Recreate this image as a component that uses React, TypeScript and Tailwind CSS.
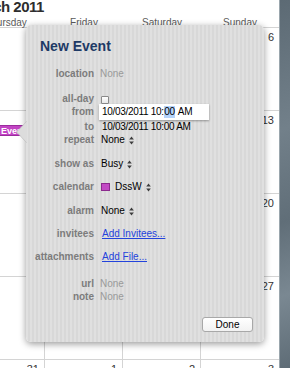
import type { ReactNode } from 'react';

const DAYS = ['Thursday', 'Friday', 'Saturday', 'Sunday'];
const WEEKS = [
  ['3', '4', '5', '6'],
  ['10', '11', '12', '13'],
  ['17', '18', '19', '20'],
  ['24', '25', '26', '27'],
  ['31', '1', '2', '3'],
];

function Stepper() {
  return (
    <svg width="5" height="9" viewBox="0 0 5 9" className="ml-[4px] shrink-0">
      <path d="M2.5 0.5 L4.8 3.6 H0.2 Z" fill="#3c3c3c" />
      <path d="M2.5 8.5 L4.8 5.4 H0.2 Z" fill="#3c3c3c" />
    </svg>
  );
}

interface RowProps {
  label: string;
  className: string;
  children?: ReactNode;
}

function Row({ label, className, children }: RowProps) {
  return (
    <div className={`flex items-center ${className}`}>
      <div className="w-[68px] shrink-0 text-right whitespace-nowrap font-bold text-[#7c7c7c]">{label}</div>
      <div className="ml-[6px] flex items-center">{children}</div>
    </div>
  );
}

function Popover() {
  return (
    <div className="absolute left-[26px] top-[25px] w-[238px] h-[317px] rounded-[5px] shadow-[0_2px_7px_rgba(0,0,0,0.4)] bg-[repeating-linear-gradient(90deg,#e0e0e0_0px,#e0e0e0_2px,#d8d8d8_2px,#d8d8d8_4px)] pt-[12px] text-[10px] leading-[12px]">
      {/* arrow towards the event */}
      <svg width="11" height="22" viewBox="0 0 11 22" className="absolute left-[-10px] top-[96px]">
        <path d="M11 0 L0.5 11 L11 22 Z" fill="#dcdcdc" stroke="#b8b8b8" strokeWidth="0.6" />
        <rect x="10" y="0.5" width="1.5" height="21" fill="#dcdcdc" />
      </svg>

      <div className="ml-[14px] h-[18px] leading-[18px] text-[14px] font-bold text-[#1e3a66]">New Event</div>

      <Row label="location" className="mt-[12px] h-[14px]">
        <span className="text-[#9a9a9a]">None</span>
      </Row>

      <Row label="all-day" className="mt-[12px] h-[11px]">
        <span className="block w-[8px] h-[8px] mt-[2px] ml-[1px] rounded-[1px] border border-[#8a8a8a] bg-[linear-gradient(#ffffff,#e8e8e8)]" />
      </Row>

      <Row label="from" className="h-[16px]">
        <div className="ml-[-1px] w-[110px] h-[16px] flex items-center pl-[3px] bg-white shadow-[0_1px_2px_rgba(0,0,0,0.35)] text-black tracking-[-0.3px]">
          10/03/2011 10:<span className="bg-[#b4d3fb] px-[0.5px]">00</span>&nbsp;AM
        </div>
      </Row>

      <Row label="to" className="h-[13px]">
        <span className="ml-[2px] text-black tracking-[-0.3px]">10/03/2011 10:00 AM</span>
      </Row>

      <Row label="repeat" className="h-[14px]">
        <span className="ml-[1px] text-black">None</span>
        <Stepper />
      </Row>

      <Row label="show as" className="mt-[10px] h-[14px]">
        <span className="ml-[1px] text-black">Busy</span>
        <Stepper />
      </Row>

      <Row label="calendar" className="mt-[9px] h-[14px]">
        <span className="block ml-[1px] w-[9px] h-[8px] bg-[#c24ac4] border border-[#8c2a8e]" />
        <span className="ml-[5px] text-black">DssW</span>
        <Stepper />
      </Row>

      <Row label="alarm" className="mt-[10px] h-[14px]">
        <span className="ml-[1px] text-black">None</span>
        <Stepper />
      </Row>

      <Row label="invitees" className="mt-[9px] h-[14px]">
        <span className="ml-[2px] text-[#2343dc] underline">Add Invitees...</span>
      </Row>

      <Row label="attachments" className="mt-[9px] h-[14px]">
        <span className="ml-[2px] text-[#2343dc] underline">Add File...</span>
      </Row>

      <Row label="url" className="mt-[13px] h-[13px]">
        <span className="text-[#9a9a9a]">None</span>
      </Row>

      <Row label="note" className="h-[13px]">
        <span className="text-[#9a9a9a]">None</span>
      </Row>

      <div className="mt-[14px] flex justify-end pr-[11px]">
        <button className="w-[51px] h-[15px] rounded-[3px] bg-[linear-gradient(#ffffff,#f2f2f2)] border border-[#a8a8a8] text-[10px] leading-[13px] text-black">
          Done
        </button>
      </div>
    </div>
  );
}

export default function App() {
  return (
    <div className="relative w-[290px] h-[368px] overflow-hidden flex font-['Liberation_Sans',Arial,sans-serif]">
      {/* Calendar month view */}
      <div className="w-[279px] h-full bg-white overflow-hidden">
        <div className="ml-[-33px] w-[312px]">
          <div className="h-[30px] border-b border-[#d4d4d4]">
            <div className="mt-[-2px] ml-[1px] h-[17px] leading-[17px] text-[15px] font-bold tracking-[-0.5px] text-[#2e2e2e] whitespace-nowrap">
              March 2011
            </div>
            <div className="mt-[2px] grid grid-cols-4 h-[12px] leading-[12px] text-[10px] text-[#5a5a5a]">
              {DAYS.map(d => (
                <div key={d} className="text-center">{d}</div>
              ))}
            </div>
          </div>

          {WEEKS.map((week, wi) => (
            <div key={wi} className="grid grid-cols-4 h-[83px] border-b border-[#d4d4d4]">
              {week.map((day, di) => (
                <div key={di} className={`pt-[3px] ${di < 3 ? 'border-r border-[#d4d4d4]' : ''}`}>
                  <div className="h-[13px] leading-[13px] pr-[5px] text-right text-[11px] text-[#333]">{day}</div>
                  {wi === 1 && di === 0 && (
                    <div className="mt-[-2px] mx-[2px] h-[11px] leading-[10px] pl-[10px] rounded-[2px] bg-[#c244c4] border border-[#9a2c9c] text-[9px] font-bold text-white whitespace-nowrap">
                      New Event
                    </div>
                  )}
                </div>
              ))}
            </div>
          ))}
        </div>
      </div>

      {/* Desktop strip at the right */}
      <div className="flex-1 h-full border-l border-[#9aa6ad] bg-[linear-gradient(160deg,#5c6a74_0%,#72808a_35%,#606e78_60%,#7a8892_80%,#5e6c76_100%)]" />

      <Popover />
    </div>
  );
}
